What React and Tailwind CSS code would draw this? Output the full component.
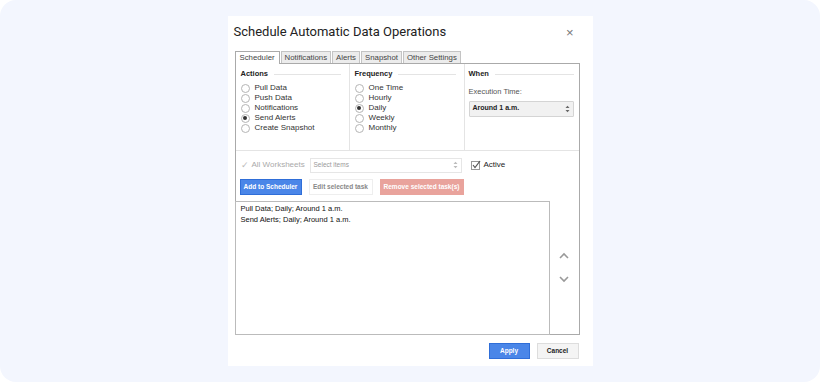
import React from "react";

const Radio = ({ label, checked }) => (
  <div className="flex items-center h-[10px] gap-[5px]">
    <span className="w-[9px] h-[9px] rounded-full border border-[#b5b5b5] bg-white flex items-center justify-center">
      {checked && <span className="w-[4px] h-[4px] rounded-full bg-[#333]" />}
    </span>
    <span className="text-[8px] text-[#333] leading-none">{label}</span>
  </div>
);

const Legend = ({ children }) => (
  <div className="flex items-center gap-[6px] h-[10px]">
    <span className="text-[7.5px] font-bold text-[#222] leading-none">{children}</span>
    <span className="flex-1 h-px bg-[#e4e4e4]" />
  </div>
);

const Tab = ({ children, active }) =>
  active ? (
    <div className="h-[13px] px-[4px] border border-b-0 border-[#aaa] bg-white flex items-center relative top-[1px]">{children}</div>
  ) : (
    <div className="h-[12px] px-[3px] ml-[1px] border border-b-0 border-[#c4c4c4] bg-[#ececec] flex items-center">{children}</div>
  );

const UpDown = ({ color = "#666" }) => (
  <svg width="5" height="8" viewBox="0 0 5 8">
    <path d="M0.5 3 L2.5 0.8 L4.5 3 Z" fill={color} />
    <path d="M0.5 5 L2.5 7.2 L4.5 5 Z" fill={color} />
  </svg>
);

export default function App() {
  return (
    <div className="w-[820px] h-[382px] bg-white" style={{ fontFamily: '"Liberation Sans", Arial, sans-serif' }}>
      <div className="w-full h-full rounded-[16px] bg-[#f3f6fe] flex justify-center pt-[16px]">
        <div className="w-[365px] h-[350px] bg-white flex flex-col px-[7px]">
          <div className="flex items-center justify-between h-[31px] pt-[1px]">
            <span className="text-[13px] text-[#222] -ml-px" style={{ fontFamily: 'Roboto, "Liberation Sans", sans-serif' }}>Schedule Automatic Data Operations</span>
            <span className="text-[13px] text-[#777] mr-[12px] leading-none">×</span>
          </div>
          <div className="flex items-end h-[16px] text-[7.8px] text-[#444] leading-none">
            <Tab active>Scheduler</Tab>
            <Tab>Notifications</Tab>
            <Tab>Alerts</Tab>
            <Tab>Snapshot</Tab>
            <Tab>Other Settings</Tab>
          </div>
          <div className="w-[345px] h-[272px] border border-[#aaa] flex flex-col">
            <div className="grid grid-cols-[114px_115px_1fr] h-[87px] border-b border-[#e4e4e4]">
              <div className="border-r border-[#e4e4e4] pl-[5px] pr-[8px] pt-[5px]">
                <Legend>Actions</Legend>
                <div className="flex flex-col mt-[4px]">
                  <Radio label="Pull Data" />
                  <Radio label="Push Data" />
                  <Radio label="Notifications" />
                  <Radio label="Send Alerts" checked />
                  <Radio label="Create Snapshot" />
                </div>
              </div>
              <div className="border-r border-[#e4e4e4] pl-[5px] pr-[8px] pt-[5px]">
                <Legend>Frequency</Legend>
                <div className="flex flex-col mt-[4px]">
                  <Radio label="One Time" />
                  <Radio label="Hourly" />
                  <Radio label="Daily" checked />
                  <Radio label="Weekly" />
                  <Radio label="Monthly" />
                </div>
              </div>
              <div className="pl-[4px] pr-[5px] pt-[5px]">
                <Legend>When</Legend>
                <div className="text-[7.5px] text-[#555] mt-[9px] leading-none">Execution Time:</div>
                <div className="mt-[5px] h-[16px] border border-[#d4d4d4] bg-[#f1f1f1] rounded-[1px] flex items-center justify-between px-[3px]">
                  <span className="text-[7px] font-bold text-[#222]">Around 1 a.m.</span>
                  <UpDown color="#666" />
                </div>
              </div>
            </div>
            <div className="flex items-center h-[16px] mt-[6px] pl-[5px]">
              <div className="w-[69px] flex items-center">
                <span className="text-[9px] text-[#bbb] leading-none">✓</span>
                <span className="text-[8px] text-[#aaa] ml-[3px] whitespace-nowrap">All Worksheets</span>
              </div>
              <div className="w-[152px] h-[15px] border border-[#e6e6e6] flex items-center justify-between px-[3px]">
                <span className="text-[6.5px] text-[#999]">Select items</span>
                <UpDown color="#bbb" />
              </div>
              <svg className="ml-[9px]" width="10" height="10" viewBox="0 0 10 10">
                <rect x="0.5" y="1.5" width="8" height="8" fill="white" stroke="#999" />
                <path d="M2 5 L4 7.5 L9 1" fill="none" stroke="#555" strokeWidth="1.2" />
              </svg>
              <span className="ml-[3px] text-[8px] text-[#222]">Active</span>
            </div>
            <div className="flex items-center h-[16px] mt-[6px] pl-[4px] gap-[7px]">
              <div className="w-[62px] h-[16px] bg-[#4a86e8] border border-[#2f6ed8] text-white text-[6.5px] font-bold flex items-center justify-center">Add to Scheduler</div>
              <div className="w-[64px] h-[16px] bg-white border border-[#eee] text-[#888] text-[6.5px] font-bold flex items-center justify-center">Edit selected task</div>
              <div className="w-[84px] h-[16px] bg-[#e9a39c] text-white text-[6.5px] font-bold flex items-center justify-center">Remove selected task(s)</div>
            </div>
            <div className="flex flex-1 mt-[6px]">
              <div className="w-[315px] -ml-px -mb-px border border-[#bbb] pt-[1px] pl-[5px] text-[7.5px] text-[#111] leading-[11px]">
                <div>Pull Data; Daily; Around 1 a.m.</div>
                <div>Send Alerts; Daily; Around 1 a.m.</div>
              </div>
              <div className="flex-1 flex flex-col items-center pt-[51px] gap-[17px]">
                <svg width="10" height="7" viewBox="0 0 10 7"><path d="M1 6 L5 2 L9 6" fill="none" stroke="#999" strokeWidth="1.6" /></svg>
                <svg width="10" height="7" viewBox="0 0 10 7"><path d="M1 1 L5 5 L9 1" fill="none" stroke="#999" strokeWidth="1.6" /></svg>
              </div>
            </div>
          </div>
          <div className="flex justify-end gap-[7px] mt-[8px] pr-[7px]">
            <div className="w-[41px] h-[16px] bg-[#4a86e8] border border-[#2f6ed8] text-white text-[6.5px] font-bold flex items-center justify-center">Apply</div>
            <div className="w-[42px] h-[16px] bg-[#f4f4f4] border border-[#ddd] text-[#222] text-[6.5px] font-bold flex items-center justify-center">Cancel</div>
          </div>
        </div>
      </div>
    </div>
  );
}
